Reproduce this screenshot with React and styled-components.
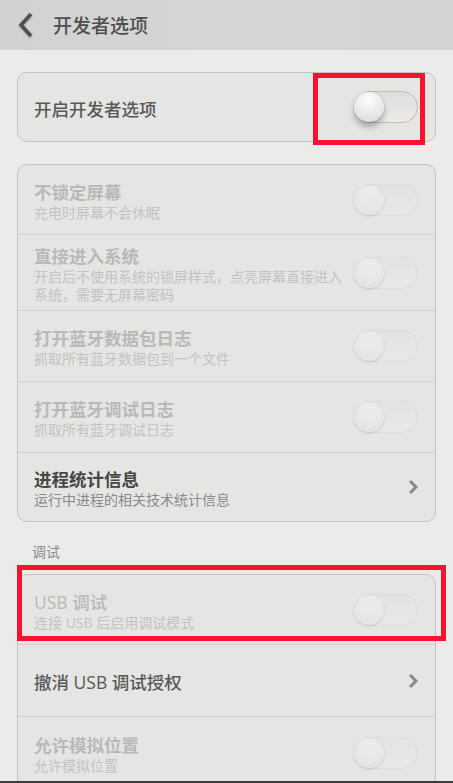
import React from 'react';
import styled, { createGlobalStyle } from 'styled-components';

const GlobalStyle = createGlobalStyle`
  html, body {
    margin: 0;
    padding: 0;
    background: #ebebea;
  }
  body {
    font-family: "Open Sans", "Noto Sans CJK SC", sans-serif;
  }
`;

export const Screen = styled.div`
  display: flex;
  flex-direction: column;
  width: 453px;
  height: 783px;
  overflow: hidden;
  background: #ebebea;
`;

export const Header = styled.div`
  display: flex;
  align-items: center;
  flex-shrink: 0;
  height: 50px;
  padding-left: 17px;
  box-sizing: border-box;
  background: linear-gradient(90deg, #d2d2d2, #d6d6d5 60%, #d3d3d3);
`;

export const HeaderTitle = styled.h1`
  margin: 0 0 0 18px;
  font-size: 19px;
  font-weight: 500;
  color: #4f4f4f;
`;

export const Content = styled.div`
  flex: 1;
  overflow: hidden;
  padding: 22px 17px 0;
  display: flex;
  flex-direction: column;
  gap: 22px;
`;

export const Card = styled.div`
  position: relative;
  flex-shrink: 0;
  border: 1px solid #c3c3c3;
  border-radius: 10px;
  background: #e5e5e4;
`;

export const Row = styled.div`
  display: flex;
  align-items: center;
  gap: 10px;
  height: ${p => p.$h}px;
  box-sizing: border-box;
  padding: 0 17px 0 16px;
  border-top: ${p => (p.$first ? 'none' : '1px solid #d2d2d1')};
`;

export const TextBlock = styled.div`
  flex: 1;
  min-width: 0;
  display: flex;
  flex-direction: column;
  margin-top: 3px;
`;

export const Title = styled.div`
  font-size: 17.5px;
  line-height: 22px;
  font-weight: ${p => (p.$bold ? 700 : 500)};
  color: ${p => (p.$disabled ? '#b9b9b9' : p.$bold ? '#474747' : '#595959')};
`;

export const Subtitle = styled.div`
  font-size: 14px;
  line-height: 18px;
  margin-top: 1px;
  color: ${p => (p.$disabled ? '#c3c3c3' : '#8a8a8a')};
`;

export const Track = styled.span`
  display: flex;
  align-items: center;
  flex-shrink: 0;
  width: 64px;
  height: 32px;
  box-sizing: border-box;
  border-radius: 16px;
  border: 1px solid ${p => (p.$disabled ? '#dddddc' : '#c8bcb1')};
  background: ${p => (p.$disabled
    ? 'linear-gradient(#e3e3e2, #e8e8e7)'
    : 'linear-gradient(#dedede, #ebebea)')};
`;

export const Knob = styled.span`
  width: 30px;
  height: 30px;
  margin-left: -1px;
  border-radius: 50%;
  background: ${p => (p.$disabled
    ? 'radial-gradient(circle at 50% 30%, #ededec, #e2e2e1)'
    : 'radial-gradient(circle at 50% 25%, #fdfdfd, #e4e4e4 70%, #cfcfcf)')};
  box-shadow: ${p => (p.$disabled
    ? '0 2px 3px rgba(0,0,0,0.07), 0 0 0 1px rgba(0,0,0,0.03)'
    : '0 5px 6px rgba(0,0,0,0.28), 0 0 0 1px rgba(0,0,0,0.06)')};
`;

export const ChevronIcon = styled.svg`
  flex-shrink: 0;
  margin-right: -1px;
`;

export const SectionLabel = styled.div`
  margin: -2px 0 -10px 15px;
  font-size: 14px;
  line-height: 20px;
  color: #8a8a8a;
`;

export const Highlight = styled.div`
  position: absolute;
  top: ${p => p.$top}px;
  left: ${p => p.$left}px;
  width: ${p => p.$w}px;
  height: ${p => p.$hgt}px;
  box-sizing: border-box;
  border: 5px solid #f5132f;
  pointer-events: none;
`;

export const BottomBar = styled.div`
  flex-shrink: 0;
  height: 2px;
  background: #3c3c3c;
`;

const Toggle = ({ disabled }) => (
  <Track $disabled={disabled}>
    <Knob $disabled={disabled} />
  </Track>
);

const Chevron = () => (
  <ChevronIcon width="12" height="16" viewBox="0 0 12 16">
    <path d="M3 2 L9 8 L3 14" fill="none" stroke="#8a8a8a" strokeWidth="3" />
  </ChevronIcon>
);

const BackArrow = () => (
  <svg width="18" height="26" viewBox="0 0 18 26" style={{ filter: 'drop-shadow(0 1px 1px rgba(0,0,0,0.25))' }}>
    <path d="M14 2 L4 13 L14 24" fill="none" stroke="#505050" strokeWidth="3.6" />
  </svg>
);

const SettingRow = ({ h, first, title, sub, disabled, bold, action }) => (
  <Row $h={h} $first={first}>
    <TextBlock>
      <Title $disabled={disabled} $bold={bold}>{title}</Title>
      {sub && <Subtitle $disabled={disabled}>{sub}</Subtitle>}
    </TextBlock>
    {action === 'chevron' ? <Chevron /> : <Toggle disabled={disabled} />}
  </Row>
);

const App = () => (
  <Screen>
    <GlobalStyle />
    <Header>
      <BackArrow />
      <HeaderTitle>开发者选项</HeaderTitle>
    </Header>
    <Content>
      <Card>
        <Row $h={68} $first>
          <TextBlock>
            <Title>开启开发者选项</Title>
          </TextBlock>
          <Toggle />
        </Row>
        <Highlight $top={0} $left={295} $w={112} $hgt={72} />
      </Card>

      <Card>
        <SettingRow h={69} first disabled bold title="不锁定屏幕" sub="充电时屏幕不会休眠" />
        <SettingRow h={76} disabled bold title="直接进入系统" sub="开启后不使用系统的锁屏样式，点亮屏幕直接进入系统，需要无屏幕密码" />
        <SettingRow h={71} disabled bold title="打开蓝牙数据包日志" sub="抓取所有蓝牙数据包到一个文件" />
        <SettingRow h={71} disabled bold title="打开蓝牙调试日志" sub="抓取所有蓝牙调试日志" />
        <SettingRow h={69} bold title="进程统计信息" sub="运行中进程的相关技术统计信息" action="chevron" />
      </Card>

      <SectionLabel>调试</SectionLabel>

      <Card>
        <SettingRow h={69} first disabled title="USB 调试" sub="连接 USB 后启用调试模式" />
        <Row $h={72}>
          <TextBlock>
            <Title>撤消 USB 调试授权</Title>
          </TextBlock>
          <Chevron />
        </Row>
        <SettingRow h={72} disabled bold title="允许模拟位置" sub="允许模拟位置" />
        <Highlight $top={-10} $left={-1} $w={429} $hgt={76} />
      </Card>
    </Content>
    <BottomBar />
  </Screen>
);

export default App;
